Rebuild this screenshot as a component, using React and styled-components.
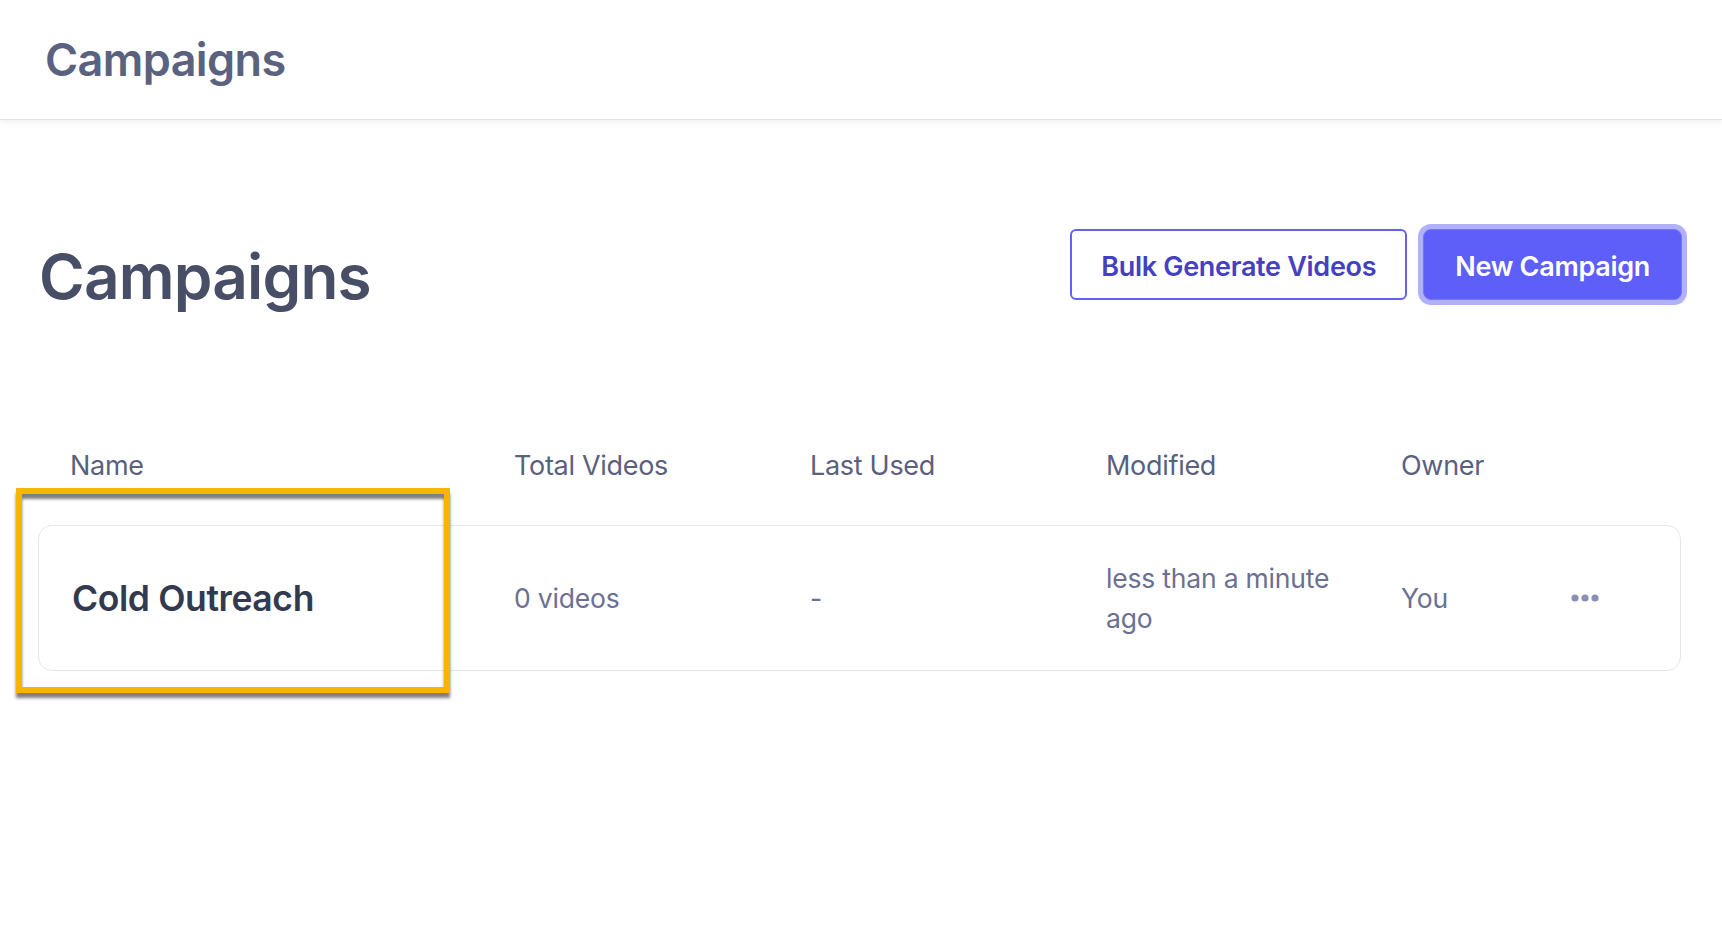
import React from "react";
import styled, { createGlobalStyle } from "styled-components";

const Global = createGlobalStyle`
  html, body { margin: 0; padding: 0; background: #ffffff; }
  body { font-family: Inter, "Noto Sans", sans-serif; -webkit-font-smoothing: antialiased; }
`;

const Page = styled.div`
  min-height: 100vh;
  background: #ffffff;
`;

const TopBar = styled.header`
  height: 119px;
  display: flex;
  align-items: center;
  padding-left: 45px;
  border-bottom: 1px solid #e3e3e6;
  box-shadow: 0 2px 6px rgba(0, 0, 0, 0.07);
`;

const TopTitle = styled.h1`
  margin: 0;
  font-size: 45px;
  font-weight: 600;
  letter-spacing: -0.6px;
  color: #5b6280;
`;

const Main = styled.main`
  padding: 0 41px 0 38px;
`;

const TitleRow = styled.div`
  display: flex;
  align-items: center;
  justify-content: space-between;
  margin-top: 107px;
`;

const PageTitle = styled.h2`
  margin: 0;
  font-size: 62px;
  font-weight: 600;
  letter-spacing: -0.8px;
  color: #474e66;
  padding-left: 1px;
  transform: translateY(12px);
`;

const Actions = styled.div`
  display: flex;
  align-items: center;
  gap: 16px;
`;

const OutlineButton = styled.button`
  height: 71px;
  padding: 3px 29px 0;
  border: 2px solid #6262f1;
  border-radius: 6px;
  background: #ffffff;
  color: #4341c2;
  font-family: Inter, sans-serif;
  font-size: 27px;
  font-weight: 600;
  letter-spacing: -0.3px;
  cursor: pointer;
`;

const PrimaryButton = styled.button`
  height: 71px;
  padding: 3px 31px 0;
  border: 1px solid #7474f4;
  border-radius: 8px;
  background: #5e5ef8;
  color: #ffffff;
  font-family: Inter, sans-serif;
  font-size: 27px;
  font-weight: 600;
  letter-spacing: -0.3px;
  box-shadow: 0 0 0 5px #b1b0fa;
  margin-right: -1px;
  cursor: pointer;
`;

const Table = styled.section`
  margin-top: 146px;
`;

const Columns = styled.div`
  display: grid;
  grid-template-columns: 444px 296px 296px 295px 170px 1fr;
  align-items: center;
  padding-left: 31px;
`;

const HeadRow = styled(Columns)`
  border: 1px solid transparent;
`;

const HeadCell = styled.div`
  font-size: 27px;
  font-weight: 400;
  color: #5a607e;
  letter-spacing: -0.3px;
`;

const RowWrap = styled.div`
  position: relative;
  margin-top: 42px;
`;

const RowCard = styled(Columns)`
  height: 144px;
  border: 1.5px solid #e6e7eb;
  border-radius: 14px;
  background: #ffffff;
`;

const NameCell = styled.div`
  font-size: 35.5px;
  font-weight: 600;
  color: #333a4f;
  letter-spacing: -0.4px;
  padding-left: 2px;
`;

const ValueCell = styled.div`
  font-size: 26.5px;
  font-weight: 400;
  color: #6a7093;
  line-height: 40px;
  letter-spacing: -0.2px;
  padding-right: ${(p) => (p.$wrap ? "30px" : "0")};
`;

const MenuButton = styled.button`
  border: 0;
  background: transparent;
  padding: 0;
  width: 30px;
  height: 12px;
  display: flex;
  align-items: center;
  cursor: pointer;
`;

const Highlight = styled.div`
  position: absolute;
  left: -22px;
  top: -37px;
  width: 434px;
  height: 205px;
  box-sizing: border-box;
  border: 6px solid #f8b500;
  pointer-events: none;
  box-shadow: 0 5px 3px rgba(0, 0, 0, 0.5), inset 0 5px 3px rgba(0, 0, 0, 0.5);
  z-index: 2;
`;

const Dots = () => (
  <svg width="28" height="8" viewBox="0 0 28 8">
    <circle cx="4" cy="4" r="3.6" fill="#8a90b6" />
    <circle cx="14" cy="4" r="3.6" fill="#8a90b6" />
    <circle cx="24" cy="4" r="3.6" fill="#8a90b6" />
  </svg>
);

export default function App() {
  return (
    <Page>
      <Global />
      <TopBar>
        <TopTitle>Campaigns</TopTitle>
      </TopBar>
      <Main>
        <TitleRow>
          <PageTitle>Campaigns</PageTitle>
          <Actions>
            <OutlineButton>Bulk Generate Videos</OutlineButton>
            <PrimaryButton>New Campaign</PrimaryButton>
          </Actions>
        </TitleRow>
        <Table>
          <HeadRow>
            <HeadCell>Name</HeadCell>
            <HeadCell>Total Videos</HeadCell>
            <HeadCell>Last Used</HeadCell>
            <HeadCell>Modified</HeadCell>
            <HeadCell>Owner</HeadCell>
          </HeadRow>
          <RowWrap>
            <RowCard>
              <NameCell>Cold Outreach</NameCell>
              <ValueCell>0 videos</ValueCell>
              <ValueCell>-</ValueCell>
              <ValueCell $wrap>less than a minute ago</ValueCell>
              <ValueCell>You</ValueCell>
              <MenuButton aria-label="More">
                <Dots />
              </MenuButton>
            </RowCard>
            <Highlight />
          </RowWrap>
        </Table>
      </Main>
    </Page>
  );
}
